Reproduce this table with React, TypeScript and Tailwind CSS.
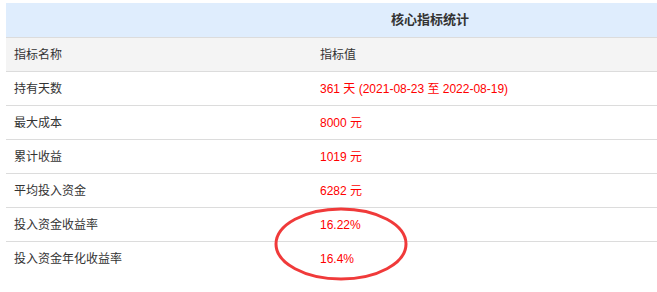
const rows: { name: string; value: React.ReactNode }[] = [
  { name: '持有天数', value: '361 天 (2021-08-23 至 2022-08-19)' },
  { name: '最大成本', value: '8000 元' },
  { name: '累计收益', value: '1019 元' },
  { name: '平均投入资金', value: '6282 元' },
  { name: '投入资金收益率', value: '16.22%' },
  { name: '投入资金年化收益率', value: '16.4%' }
]

const font = { fontFamily: '"Liberation Sans", "Noto Sans CJK SC", sans-serif' }

export default function App (): JSX.Element {
  return (
    <div className="relative h-[292px] w-[657px] overflow-hidden bg-white text-[12px] text-[#333]" style={font}>
      <div className="ml-[6px] pt-[3px] w-[651px]">
        <div className="flex h-[35px] items-center border-b border-[#dcdcdc] bg-[#dfedfd] pl-[385px] text-[13px] font-bold text-[#333]">
          核心指标统计
        </div>
        <div className="grid h-[34px] grid-cols-[306px_1fr] items-center border-b border-[#dcdcdc] bg-[#f4f4f4]">
          <span className="pl-[8px]">指标名称</span>
          <span className="pl-[8px]">指标值</span>
        </div>
        {rows.map((row, i) => (
          <div
            key={row.name}
            className={`grid h-[34px] grid-cols-[306px_1fr] items-center ${i < rows.length - 1 ? 'border-b border-[#dcdcdc]' : ''}`}
          >
            <span className="pl-[8px]">{row.name}</span>
            <span className="pl-[8px] text-[#ff0000]">{row.value}</span>
          </div>
        ))}
      </div>
      <svg className="absolute left-[272px] top-[205px]" width="138" height="78" viewBox="0 0 138 78">
        <ellipse cx="69" cy="39" rx="65" ry="35" fill="none" stroke="#f03a3a" strokeWidth="3" />
      </svg>
    </div>
  )
}
